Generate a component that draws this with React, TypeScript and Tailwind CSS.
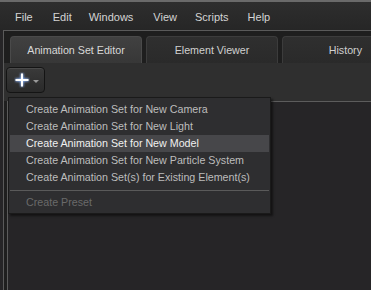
import React from "react";

const font = { fontFamily: '"Liberation Sans", Arial, sans-serif' };

export default function App() {
  const items = [
    "Create Animation Set for New Camera",
    "Create Animation Set for New Light",
    "Create Animation Set for New Model",
    "Create Animation Set for New Particle System",
    "Create Animation Set(s) for Existing Element(s)",
  ];
  return (
    <div className="w-[371px] h-[290px] overflow-hidden bg-[#262527] flex flex-col text-[10.7px]" style={font}>
      <div className="h-[2px] bg-[#6a6a6a]" />
      <div className="h-[28px] flex items-center pt-[2px] bg-gradient-to-b from-[#2e2e2e] to-[#262626] text-[#d4d4d4] text-[11px]">
        <span className="ml-[15px]">File</span>
        <span className="ml-[20px]">Edit</span>
        <span className="ml-[17px]">Windows</span>
        <span className="ml-[20px]">View</span>
        <span className="ml-[18px]">Scripts</span>
        <span className="ml-[19px]">Help</span>
      </div>
      <div className="flex-1 flex flex-col ml-[3px] border-l border-t border-[#5a5a5a] bg-[#1f1f1f] relative">
        <div className="flex items-end h-[32px] pl-[6px] gap-[4px] bg-[#1e1e1e] overflow-hidden">
          <div className="shrink-0 w-[132px] h-[27px] rounded-t-[4px] border border-b-0 border-[#4a4a4a] bg-gradient-to-b from-[#414141] to-[#373737] flex items-center justify-center text-[#d8d8d8]">Animation Set Editor</div>
          <div className="shrink-0 w-[132px] h-[27px] rounded-t-[4px] border border-b-0 border-[#3c3c3c] bg-gradient-to-b from-[#2f2f2f] to-[#2a2a2a] flex items-center justify-center text-[#d0d0d0]">Element Viewer</div>
          <div className="shrink-0 w-[89px] h-[27px] rounded-tl-[4px] border border-b-0 border-r-0 border-[#3c3c3c] bg-gradient-to-b from-[#2f2f2f] to-[#2a2a2a] flex items-center justify-end pr-[9px] text-[#d0d0d0]">History</div>
        </div>
        <div className="h-[38px] bg-[#2f2f2f] flex items-start pt-[4px] pl-[2px]">
          <div className="w-[39px] h-[26px] rounded-[4px] border border-[#141414] bg-gradient-to-b from-[#3a3a3a] to-[#2a2a2a] shadow-[inset_0_1px_0_#4a4a4a] flex items-center pl-[7px] gap-[3px]">
            <svg width="16" height="16" viewBox="0 0 16 16">
              <defs>
                <filter id="g" x="-50%" y="-50%" width="200%" height="200%">
                  <feGaussianBlur stdDeviation="0.8" />
                </filter>
              </defs>
              <path d="M8 1.5V14.5M1.5 8H14.5" stroke="#8fb8ff" strokeWidth="3" filter="url(#g)" />
              <path d="M8 1.5V14.5M1.5 8H14.5" stroke="#ffffff" strokeWidth="2" />
            </svg>
            <svg width="6" height="4" viewBox="0 0 6 4" className="mt-[4px]">
              <path d="M0 0H6L3 3Z" fill="#9a9a9a" />
            </svg>
          </div>
        </div>
        <div className="flex-1 ml-[3px] border-l border-t border-[#5c5c5c] bg-[#262527]" />
        <div className="absolute left-[4px] top-[66px] w-[263px] bg-[#2e2e30] border border-[#1a1a1a] shadow-[2px_2px_2px_rgba(0,0,0,0.5)] pt-[3px] pb-[2px] text-[#bdbdbd]">
          {items.map((t, i) => (
            <div key={i} className={`h-[17px] flex items-center pl-[16px] mx-[1px] ${i === 2 ? "bg-[#47474a] text-[#f0f0f0]" : ""}`}>{t}</div>
          ))}
          <div className="h-[8px] flex items-center px-[1px]">
            <div className="h-px w-full bg-[#5a5a5a]" />
          </div>
          <div className="h-[17px] flex items-center pl-[17px] text-[#6a6a6a]">Create Preset</div>
        </div>
      </div>
    </div>
  );
}
